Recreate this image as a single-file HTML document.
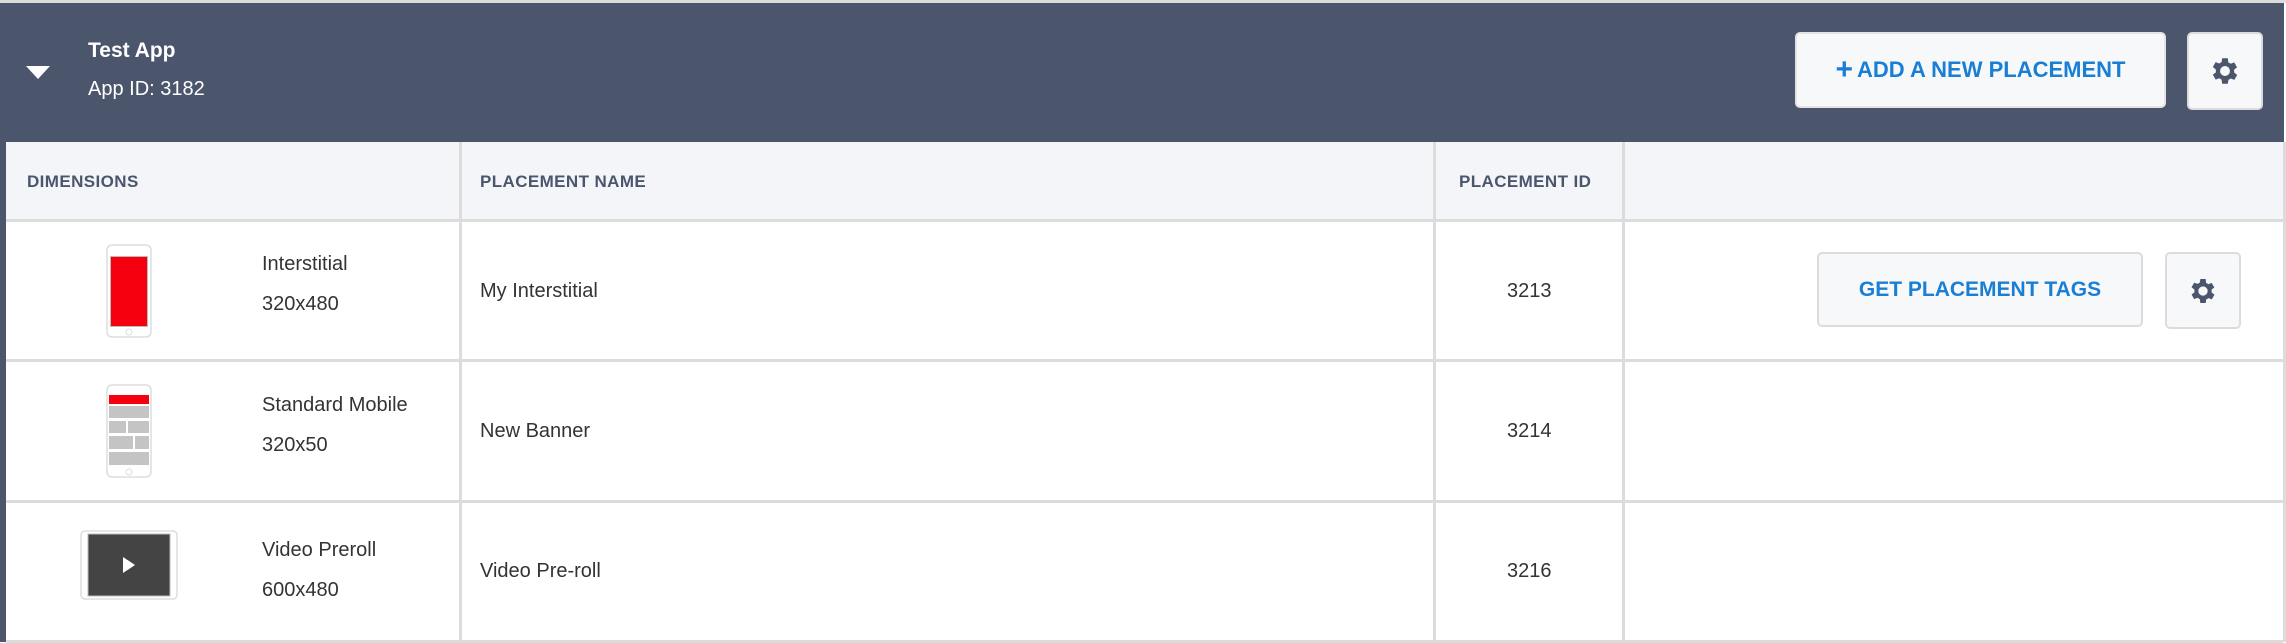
<!DOCTYPE html>
<html><head><meta charset="utf-8"><style>
*{margin:0;padding:0;box-sizing:border-box}
body{width:2286px;height:642px;background:#fff;position:relative;overflow:hidden;font-family:"Liberation Sans",sans-serif;color:#333}
.a{position:absolute}
.hdr{left:0;top:3px;width:2284px;height:139px;background:#4b566d}
.topline{left:0;top:0;width:2286px;height:3px;background:#dcdcdc}
.lstrip{left:0;top:142px;width:6px;height:500px;background:#4b566d}
.rline{left:2283px;top:142px;width:3px;height:500px;background:#dcdcdc}
.thead{left:6px;top:142px;width:2277px;height:79px;background:#f4f5f9}
.hl{height:3px;background:#dcdcdc;left:6px;width:2277px}
.vl{width:3px;background:#dcdcdc;top:142px;height:500px}
.th{font-weight:bold;font-size:17px;color:#4b566d;top:172px;letter-spacing:.4px}
.t{font-size:20px;color:#333;line-height:24px}
.btn{background:#f7f8fa;border:2px solid #dcdcdc;border-radius:5px;color:#1a7fd4;font-weight:bold;font-size:21px;display:flex;align-items:center;justify-content:center}
</style></head><body>
<div class="a topline"></div>
<div class="a hdr"></div>
<svg class="a" style="left:26px;top:66px" width="24" height="14"><polygon points="0,0 24,0 12,13" fill="#fff"/></svg>
<div class="a" style="left:88px;top:39px;color:#fff;font-weight:bold;font-size:21px">Test App</div>
<div class="a" style="left:88px;top:78px;color:#fff;font-size:20px">App ID: 3182</div>
<div class="a btn" style="left:1795px;top:32px;width:371px;height:76px;border-color:#e4e4e4;font-size:22px"><span style="font-size:30px;margin-right:4px;line-height:1">+</span>ADD A NEW PLACEMENT</div>
<div class="a btn" style="left:2187px;top:32px;width:76px;height:78px"><svg width="34" height="34" viewBox="0 0 24 24"><path fill="#4b566d" d="M19.4 13a7.5 7.5 0 0 0 0-2l2.1-1.6-2-3.5-2.5 1a7 7 0 0 0-1.7-1L15 3h-4l-.4 2.7a7 7 0 0 0-1.7 1l-2.5-1-2 3.5L6.6 11a7.5 7.5 0 0 0 0 2l-2.2 1.6 2 3.5 2.5-1a7 7 0 0 0 1.7 1L11 21h4l.4-2.7a7 7 0 0 0 1.7-1l2.5 1 2-3.5zM13 15.5a3.5 3.5 0 1 1 0-7 3.5 3.5 0 0 1 0 7z" transform="translate(-1 0)"/></svg></div>
<div class="a lstrip"></div>
<div class="a rline"></div>
<div class="a thead"></div>
<div class="a hl" style="top:219px"></div>
<div class="a hl" style="top:359px"></div>
<div class="a hl" style="top:500px"></div>
<div class="a hl" style="top:640px"></div>
<div class="a vl" style="left:459px"></div>
<div class="a vl" style="left:1433px"></div>
<div class="a vl" style="left:1622px"></div>
<div class="a th" style="left:27px">DIMENSIONS</div>
<div class="a th" style="left:480px">PLACEMENT NAME</div>
<div class="a th" style="left:1459px">PLACEMENT ID</div>
<!-- row1 -->
<svg class="a" style="left:106px;top:244px" width="46" height="94"><rect x="1" y="1" width="44" height="92" rx="5" fill="#fff" stroke="#ddd" stroke-width="1.5"/><rect x="4" y="12" width="38" height="71" fill="#bbb"/><rect x="5" y="13" width="36" height="69" fill="#f5000e"/><circle cx="23" cy="88" r="3" fill="none" stroke="#ddd"/></svg>
<div class="a t" style="left:262px;top:252px">Interstitial</div>
<div class="a t" style="left:262px;top:292px">320x480</div>
<div class="a t" style="left:480px;top:279px">My Interstitial</div>
<div class="a t" style="left:1507px;top:279px">3213</div>
<div class="a btn" style="left:1817px;top:252px;width:326px;height:75px">GET PLACEMENT TAGS</div>
<div class="a btn" style="left:2165px;top:252px;width:76px;height:77px"><svg width="32" height="32" viewBox="0 0 24 24"><path fill="#4b566d" d="M19.4 13a7.5 7.5 0 0 0 0-2l2.1-1.6-2-3.5-2.5 1a7 7 0 0 0-1.7-1L15 3h-4l-.4 2.7a7 7 0 0 0-1.7 1l-2.5-1-2 3.5L6.6 11a7.5 7.5 0 0 0 0 2l-2.2 1.6 2 3.5 2.5-1a7 7 0 0 0 1.7 1L11 21h4l.4-2.7a7 7 0 0 0 1.7-1l2.5 1 2-3.5zM13 15.5a3.5 3.5 0 1 1 0-7 3.5 3.5 0 0 1 0 7z" transform="translate(-1 0)"/></svg></div>
<!-- row2 -->
<svg class="a" style="left:106px;top:384px" width="46" height="94"><rect x="1" y="1" width="44" height="92" rx="5" fill="#fff" stroke="#ddd" stroke-width="1.5"/><rect x="3" y="11" width="40" height="9" fill="#f5000e"/><rect x="3" y="22" width="40" height="12" fill="#c4c4c4"/><rect x="3" y="37" width="17" height="12" fill="#c4c4c4"/><rect x="22" y="37" width="21" height="12" fill="#c4c4c4"/><rect x="3" y="52" width="24" height="13" fill="#c4c4c4"/><rect x="29" y="52" width="14" height="13" fill="#c4c4c4"/><rect x="3" y="68" width="40" height="13" fill="#c4c4c4"/><circle cx="23" cy="88" r="3" fill="none" stroke="#ddd"/></svg>
<div class="a t" style="left:262px;top:393px">Standard Mobile</div>
<div class="a t" style="left:262px;top:433px">320x50</div>
<div class="a t" style="left:480px;top:419px">New Banner</div>
<div class="a t" style="left:1507px;top:419px">3214</div>
<!-- row3 -->
<svg class="a" style="left:80px;top:530px" width="98" height="70"><rect x="1" y="1" width="96" height="68" rx="4" fill="#fff" stroke="#ddd" stroke-width="1.5"/><rect x="8" y="4" width="82" height="62" fill="#444" stroke="#bbb"/><polygon points="43,27 43,43 55,35" fill="#fff"/></svg>
<div class="a t" style="left:262px;top:538px">Video Preroll</div>
<div class="a t" style="left:262px;top:578px">600x480</div>
<div class="a t" style="left:480px;top:559px">Video Pre-roll</div>
<div class="a t" style="left:1507px;top:559px">3216</div>
</body></html>
